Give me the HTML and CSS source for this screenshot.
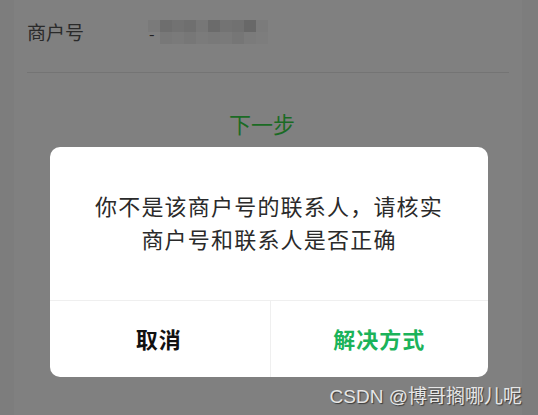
FILE: index.html
```html
<!DOCTYPE html>
<html lang="zh-CN">
<head>
    <meta charset="UTF-8">
    <meta name="viewport" content="width=device-width, initial-scale=1.0">
    <title>商户号</title>
    <link rel="stylesheet" href="styles.css">
</head>
<body>

    <!-- page under the mask -->
    <main class="page">
        <div class="field-row">
            <span class="field-label">商户号</span>
            <div class="field-value">
                <span class="dash">-</span>
                <div class="mosaic">
                    <i></i><i></i><i></i><i></i><i></i><i></i><i></i><i></i><i></i><i></i>
                    <i></i><i></i><i></i><i></i><i></i><i></i><i></i><i></i><i></i><i></i>
                </div>
            </div>
        </div>
        <div class="next-step">下一步</div>
    </main>

    <!-- dialog -->
    <div class="dialog">
        <div class="dialog-body">
            <p>你不是该商户号的联系人，请核实</p>
            <p>商户号和联系人是否正确</p>
        </div>
        <div class="dialog-actions">
            <button class="btn-cancel">取消</button>
            <button class="btn-ok">解决方式</button>
        </div>
    </div>

    <div class="watermark">CSDN @博哥搁哪儿呢</div>

</body>
</html>
```

FILE: styles.css
```css
html, body {
    margin: 0;
    height: 100%;
}

body {
    background-color: #7d7d7d;
    font-family: "Noto Sans CJK SC", "Noto Sans", sans-serif;
    position: relative;
    overflow: hidden;
}

.page {
    margin: 0 16px 0 14px;
    height: 100%;
    background-color: #808080;
    padding: 0 13px;
}

.field-row {
    display: flex;
    align-items: center;
    height: 72px;
    border-bottom: 1px solid #747474;
}

.field-label {
    width: 121px;
    font-size: 19px;
    color: #2a2a2a;
    margin-top: -9px;
}

.field-value {
    position: relative;
    margin-top: -8px;
}

.dash {
    position: absolute;
    left: 1px;
    top: 1px;
    font-size: 16px;
    color: #222;
}

.mosaic {
    display: grid;
    grid-template-columns: repeat(10, 12px);
    grid-auto-rows: 12px;
}

.mosaic i:nth-child(1) { background: #7a7a7a; }
.mosaic i:nth-child(2) { background: #6e6e6e; }
.mosaic i:nth-child(3) { background: #727272; }
.mosaic i:nth-child(4) { background: #6f6f6f; }
.mosaic i:nth-child(5) { background: #777777; }
.mosaic i:nth-child(6) { background: #6b6b6b; }
.mosaic i:nth-child(7) { background: #737373; }
.mosaic i:nth-child(8) { background: #717171; }
.mosaic i:nth-child(9) { background: #686868; }
.mosaic i:nth-child(10) { background: #7b7b7b; }
.mosaic i:nth-child(11) { background: #808080; }
.mosaic i:nth-child(12) { background: #787878; }
.mosaic i:nth-child(13) { background: #7a7a7a; }
.mosaic i:nth-child(14) { background: #777777; }
.mosaic i:nth-child(15) { background: #7b7b7b; }
.mosaic i:nth-child(16) { background: #797979; }
.mosaic i:nth-child(17) { background: #7a7a7a; }
.mosaic i:nth-child(18) { background: #767676; }
.mosaic i:nth-child(19) { background: #7b7b7b; }
.mosaic i:nth-child(20) { background: #7d7d7d; }

.next-step {
    text-align: center;
    margin-top: 34px;
    margin-left: -12px;
    font-size: 22px;
    color: #1a6b24;
}

.dialog {
    position: absolute;
    left: 50px;
    top: 147px;
    width: 438px;
    height: 230px;
    background-color: #fff;
    border-radius: 10px;
    display: flex;
    flex-direction: column;
    overflow: hidden;
}

.dialog-body {
    flex: 1;
    display: flex;
    flex-direction: column;
    justify-content: center;
    align-items: center;
    padding-bottom: 3px;
    border-bottom: 1px solid #efefef;
}

.dialog-body p {
    margin: 0;
    font-size: 22px;
    line-height: 33px;
    letter-spacing: 1.2px;
    color: #2a2a2a;
}

.dialog-actions {
    display: flex;
    height: 76px;
}

.dialog-actions button {
    flex: 1;
    border: none;
    background: none;
    font-family: inherit;
    font-size: 22px;
    font-weight: bold;
    letter-spacing: 1px;
    padding: 0 0 2px;
}

.btn-cancel {
    color: #111;
    border-right: 1px solid #efefef !important;
    padding-right: 2px !important;
}

.btn-ok {
    color: #1bb35a;
}

.watermark {
    position: absolute;
    right: 16px;
    bottom: 7px;
    font-size: 19px;
    color: #e6e6e6;
    text-shadow: 1px 1px 1px #3a3a3a;
    font-family: "Liberation Sans", "Noto Sans CJK SC", sans-serif;
}
```
